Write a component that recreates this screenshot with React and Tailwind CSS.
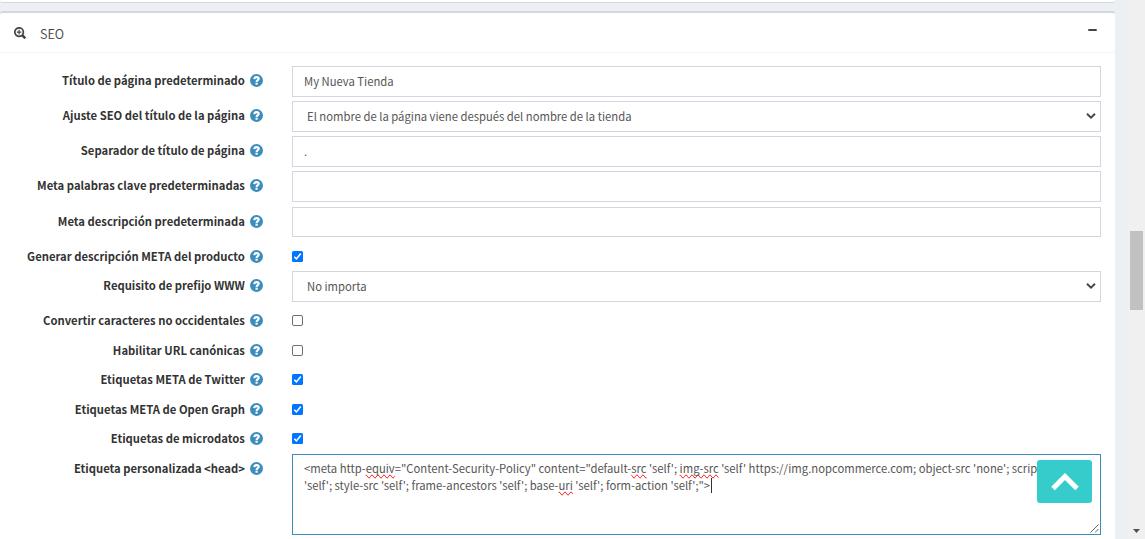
import { FaMinus } from "react-icons/fa";

function ZoomInIcon() {
  return (
    <svg className="h-[12px] w-[12px]" viewBox="0 0 12 12" fill="none" stroke="currentColor">
      <circle cx="5.1" cy="5.1" r="4.3" strokeWidth="1.7" />
      <path d="M8.2 8.2 11.3 11.3" strokeWidth="2.5" />
      <path d="M2.8 5.1H7.4M5.1 2.8V7.4" strokeWidth="1.2" />
    </svg>
  );
}

function HelpIcon() {
  return (
    <svg className="mb-[1px] ml-[5.5px] h-[13px] w-[13px] shrink-0" viewBox="0 0 13 13">
      <circle cx="6.5" cy="6.5" r="6.5" fill="#3c8dbc" />
      <path d="M4.2 5.1C4.4 3.7 5.3 3.1 6.5 3.1 7.7 3.1 8.7 3.8 8.7 4.8 8.7 6.2 6.6 6.1 6.6 7.9" fill="none" stroke="#fff" strokeWidth="2.1" />
      <rect x="5.5" y="8.7" width="2.2" height="2" fill="#fff" />
    </svg>
  );
}

function Checkbox({ checked }) {
  return (
    <svg className="mt-[9px] block h-[11px] w-[11px]" viewBox="0 0 11 11" role="checkbox" aria-checked={checked}>
      {checked ? (
        <>
          <rect width="11" height="11" rx="1.5" fill="#0075ff" />
          <path d="M2.3 5.8 4.4 7.9 8.8 2.5" fill="none" stroke="#fff" strokeWidth="1.6" />
        </>
      ) : (
        <rect x="0.5" y="0.5" width="10" height="10" rx="1.5" fill="#fff" stroke="#6f6f6f" />
      )}
    </svg>
  );
}

function TextField({ children, short }) {
  return (
    <div className={`${short ? "h-[30px]" : "h-[31px]"} flex items-center border border-[#d2d6de] bg-white pl-[11px] text-[#555]`}>
      {children}
    </div>
  );
}

function SelectField({ children }) {
  return (
    <div className="flex h-[31px] items-center justify-between border border-[#d2d6de] bg-white pr-[4px] pl-[14px] text-[#555]">
      <span className="pb-[1px]">{children}</span>
      <svg className="mb-px h-[6px] w-[10px]" viewBox="0 0 10 6">
        <path d="M1 0.8 5 4.6 9 0.8" fill="none" stroke="#444" strokeWidth="1.9" />
      </svg>
    </div>
  );
}

function Misspelled({ children }) {
  return <span className="[text-decoration-line:spelling-error]">{children}</span>;
}

function HeadTextarea() {
  return (
    <div className="relative h-[81px] border border-[#3c8dbc] bg-white pt-[5px] pl-[11px] leading-[17px] whitespace-nowrap text-[#555]">
      <div>
        &lt;meta http-<Misspelled>equiv</Misspelled>="Content-Security-Policy" content="default-<Misspelled>src</Misspelled> 'self';{" "}
        <Misspelled>img-src</Misspelled> 'self' https://img.nopcommerce.com; object-src 'none'; script-src
      </div>
      <div className="flex items-center">
        <span>
          'self'; style-src 'self'; frame-ancestors 'self'; base-<Misspelled>uri</Misspelled> 'self'; form-action 'self';"&gt;
        </span>
        <span className="ml-px h-[15px] w-px bg-[#333]" />
      </div>
      <svg className="absolute right-[1px] bottom-[1px] h-[9px] w-[9px]" viewBox="0 0 9 9">
        <path d="M0.5 8.5 8.5 0.5M5 8.5 8.5 5" stroke="#555" strokeWidth="0.9" />
      </svg>
      <button className="absolute top-[5px] right-[8px] flex h-[43px] w-[55px] items-center justify-center rounded-[3px] bg-[#37cccc]">
        <svg className="h-[18px] w-[28px]" viewBox="0 0 28 18">
          <path d="M2 15.5 14 3.5 26 15.5" fill="none" stroke="#fff" strokeWidth="5" />
        </svg>
      </button>
    </div>
  );
}

const rows = [
  { label: "Título de página predeterminado", height: "h-[35px]", control: <TextField>My Nueva Tienda</TextField> },
  { label: "Ajuste SEO del título de la página", height: "h-[35px]", control: <SelectField>El nombre de la página viene después del nombre de la tienda</SelectField> },
  { label: "Separador de título de página", height: "h-[35px]", control: <TextField>.</TextField> },
  { label: "Meta palabras clave predeterminadas", height: "h-[36px]", control: <TextField /> },
  { label: "Meta descripción predeterminada", height: "h-[35px]", control: <TextField short /> },
  { label: "Generar descripción META del producto", height: "h-[29px]", control: <Checkbox checked /> },
  { label: "Requisito de prefijo WWW", height: "h-[35px]", control: <SelectField>No importa</SelectField> },
  { label: "Convertir caracteres no occidentales", height: "h-[30px]", control: <Checkbox checked={false} /> },
  { label: "Habilitar URL canónicas", height: "h-[29px]", control: <Checkbox checked={false} /> },
  { label: "Etiquetas META de Twitter", height: "h-[30px]", control: <Checkbox checked /> },
  { label: "Etiquetas META de Open Graph", height: "h-[29px]", control: <Checkbox checked /> },
  { label: "Etiquetas de microdatos", height: "h-[30px]", control: <Checkbox checked /> },
  { label: "Etiqueta personalizada <head>", height: "h-[85px]", control: <HeadTextarea /> },
];

export default function App() {
  return (
    <div className="flex h-[539px] w-[1145px] overflow-hidden bg-[#ecf0f5] font-['Noto_Sans_CJK_SC',sans-serif] text-[11.27px]">
      <main className="flex w-[1115px] flex-col">
        <div className="h-[3px] shrink-0 rounded-b-[3px] border-b border-[#d2d6de] bg-white" />
        <section className="mt-[8px] h-[528px] rounded-t-[3px] border-t-2 border-[#d2d6de] bg-white">
          <header className="flex h-[40px] items-center justify-between border-b border-[#f4f4f4] pr-[18px] pl-[14px] text-[#444]">
            <div className="flex items-center">
              <ZoomInIcon />
              <h3 className="mt-[2px] ml-[14px] text-[12.6px] leading-[18px] font-[350]">SEO</h3>
            </div>
            <FaMinus className="mb-[5px] h-[10px] w-[9px]" />
          </header>
          <div className="pt-[13px] pr-[14px]">
            {rows.map((row) => (
              <div key={row.label} className={`${row.height} flex`}>
                <div className="flex h-[30px] w-[292px] shrink-0 items-center justify-end pr-[28.6px]">
                  <span className="pb-[2px] font-bold whitespace-nowrap text-[#333]">{row.label}</span>
                  <HelpIcon />
                </div>
                <div className="min-w-0 flex-1">{row.control}</div>
              </div>
            ))}
          </div>
        </section>
      </main>
      <div className="w-[13px]" />
      <aside className="flex w-[17px] flex-col items-center justify-between bg-[#f0f0f0] pb-[6px]">
        <div className="mt-[231px] h-[79px] w-[13px] bg-[#c1c1c1]" />
        <svg className="h-[4px] w-[7px]" viewBox="0 0 7 4">
          <path d="M0 0H7L3.5 4Z" fill="#505050" />
        </svg>
      </aside>
    </div>
  );
}
